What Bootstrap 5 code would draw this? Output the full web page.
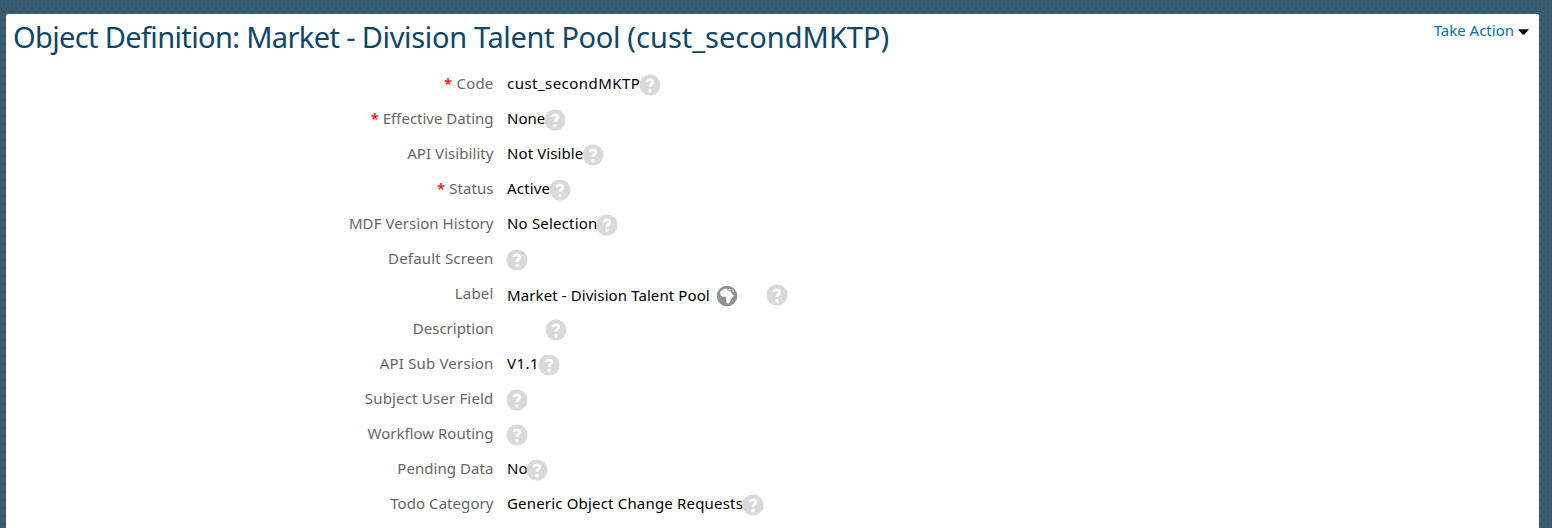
<!DOCTYPE html>
<html lang="en">
<head>
<meta charset="utf-8">
<title>Object Definition</title>
<link href="https://cdn.jsdelivr.net/npm/bootstrap@5.3.0/dist/css/bootstrap.min.css" rel="stylesheet">
<style>
body{height:528px;padding:14px 13px 0 6px;font-family:"Noto Sans",sans-serif;font-size:15px;line-height:20px;color:#000;background-color:#3a5d70;background-image:radial-gradient(circle,#335366 0 1px,transparent 2.2px),radial-gradient(circle,#335366 0 1px,transparent 2.2px);background-size:8px 8px;background-position:0 0,4px 4px}
.panel{height:514px;border-radius:2px 2px 0 0}
.panel h1{font-size:29px;line-height:36px;color:#0f4668;margin:5px 0 0 7px;white-space:nowrap}
.object-type{letter-spacing:-.64px}
.object-name{letter-spacing:-.34px}
.action{color:#0a6ea4;margin:6px 10px 0 0;height:20px}
.arrow{margin:9px 0 0 4px}
.fields{padding-top:18px}
.entry{height:35px}
.caption{width:487.5px;color:#666;white-space:nowrap;letter-spacing:.06px}
.caption i{color:#f00;font-style:normal;font-weight:500}
.value{margin-left:13.5px;white-space:nowrap;letter-spacing:.1px}
.lowered{margin-top:2px}
.flush{letter-spacing:0}
.open{letter-spacing:.18px}
.wide{letter-spacing:.46px}
.help{width:22px;height:22px;margin-top:1px;margin-left:-1px}
.globe{width:22px;height:22px;margin:2px 29px 0 6px}
.empty-text{width:39px}
</style>
</head>
<body class="overflow-hidden">
<svg class="d-none"><symbol id="q" viewBox="0 0 22 22"><circle cx="11" cy="11" r="10.5" fill="#d9d9d9"/><path d="M7.9 8.2C8.1 6.4 9.3 5.8 10.8 5.8c1.8 0 3 .8 3 2.3 0 2.4-2.8 2.2-2.9 4.8" fill="none" stroke="#fff" stroke-width="2.7"/><circle cx="11" cy="16.6" r="1.8" fill="#fff"/></symbol></svg>
<main class="panel bg-white overflow-hidden">
<header class="d-flex justify-content-between align-items-start">
<h1 class="fw-normal"><span class="object-type">Object Definition: Market - </span><span class="object-name">Division Talent Pool </span>(cust_secondMKTP)</h1>
<a class="action d-flex text-decoration-none" href="#">Take Action<svg class="arrow" width="11" height="6" viewBox="0 0 11 6"><path d="M0 .2h11L6.5 5.4h-2z" fill="#000"/></svg></a>
</header>
<section class="fields">
<div class="entry d-flex"><div class="caption text-end open"><i>*</i> Code</div><div class="value wide">cust_secondMKTP</div><svg class="help"><use href="#q"/></svg></div>
<div class="entry d-flex"><div class="caption text-end flush"><i>*</i> Effective Dating</div><div class="value flush">None</div><svg class="help"><use href="#q"/></svg></div>
<div class="entry d-flex"><div class="caption text-end">API Visibility</div><div class="value">Not Visible</div><svg class="help"><use href="#q"/></svg></div>
<div class="entry d-flex"><div class="caption text-end"><i>*</i> Status</div><div class="value open">Active</div><svg class="help"><use href="#q"/></svg></div>
<div class="entry d-flex"><div class="caption text-end">MDF Version History</div><div class="value open">No Selection</div><svg class="help"><use href="#q"/></svg></div>
<div class="entry d-flex"><div class="caption text-end open">Default Screen</div><div class="value"></div><svg class="help"><use href="#q"/></svg></div>
<div class="entry d-flex"><div class="caption text-end open">Label</div><div class="value lowered">Market - Division Talent Pool</div><svg class="globe" viewBox="0 0 22 22"><circle cx="11" cy="11" r="10.3" fill="#929292"/><path d="M4.6 6.2 8 4l2.6-.6 1 1.4 1.8-.5 1.6.8-.4 1.5 1.8 3 1.5.4-1.2 2.2-1.8 1.6-.5 2.5-2.2 2.4-1.4-.6-.7-3.2.2-2-1-1.4-2.8.2-2-1.6-.3-2z" fill="#fff"/><path d="m11 4.6 1.2 1.2 2.8-.4" fill="none" stroke="#929292" stroke-width=".8"/><path d="m15.2 3.4 2.6 2 .8 1.8-1.7-.6z" fill="#e5e5e5"/></svg><svg class="help"><use href="#q"/></svg></div>
<div class="entry d-flex"><div class="caption text-end flush">Description</div><div class="value empty-text"></div><svg class="help"><use href="#q"/></svg></div>
<div class="entry d-flex"><div class="caption text-end open">API Sub Version</div><div class="value wide">V1.1</div><svg class="help"><use href="#q"/></svg></div>
<div class="entry d-flex"><div class="caption text-end open">Subject User Field</div><div class="value"></div><svg class="help"><use href="#q"/></svg></div>
<div class="entry d-flex"><div class="caption text-end flush">Workflow Routing</div><div class="value"></div><svg class="help"><use href="#q"/></svg></div>
<div class="entry d-flex"><div class="caption text-end">Pending Data</div><div class="value flush">No</div><svg class="help"><use href="#q"/></svg></div>
<div class="entry d-flex"><div class="caption text-end">Todo Category</div><div class="value open">Generic Object Change Requests</div><svg class="help"><use href="#q"/></svg></div>
</section>
</main>
<script src="https://cdn.jsdelivr.net/npm/bootstrap@5.3.0/dist/js/bootstrap.bundle.min.js"></script>
</body>
</html>
